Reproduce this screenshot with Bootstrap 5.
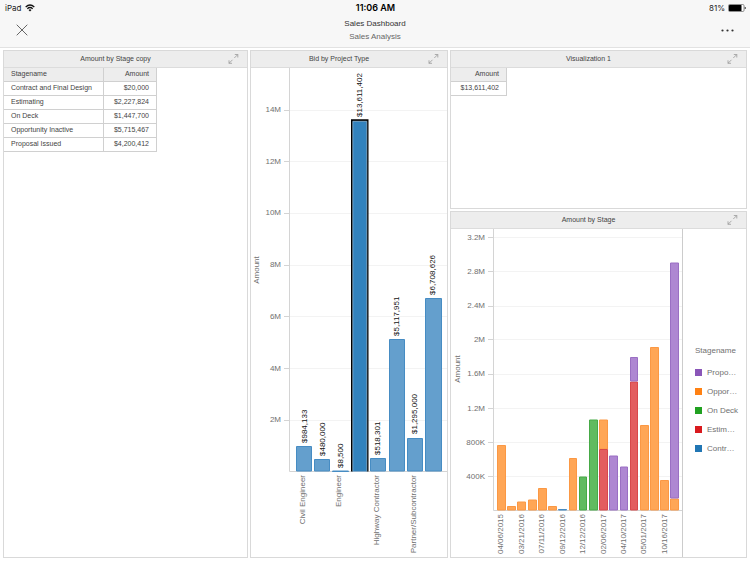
<!DOCTYPE html>
<html lang="en">
<head>
<meta charset="utf-8">
<meta name="viewport" content="width=device-width, initial-scale=1">
<title>Sales Dashboard</title>
<link href="https://cdn.jsdelivr.net/npm/bootstrap@5.3.0/dist/css/bootstrap.min.css" rel="stylesheet">
<style>
  body { font-family: "Liberation Sans", Arial, sans-serif; font-size: 8px; line-height: 12px; color: #4d4d4d; background: #fff; }
  .top-bar { background: #f7f7f7; border-bottom: 1px solid #e2e2e2; }
  .status-row { font-family: Inter, "Liberation Sans", sans-serif; height: 16px; padding: 0 4px 0 5px; color: #222; }
  .status-row > *, .nav-row > .side { flex: 1 1 0; }
  .status-icons { gap: 3px; }
  .clock { font-size: 9px; font-weight: 600; color: #000; }
  .nav-row { height: 31px; padding: 0 15px; }
  .plain-btn { border: 0; background: none; padding: 0; line-height: 0; color: #555; }
  .titles { padding-top: 1px; }
  .page-title { font-size: 8px; line-height: 13px; font-weight: 400; color: #333; }
  .page-sub { font-size: 8px; line-height: 13px; color: #666; }
  .board { display: grid; grid-template-columns: 245fr 198fr 297fr; grid-template-rows: 159fr 347fr; gap: 2px; padding: 2px 3px 4px; }
  .tall { grid-row: 1 / span 2; }
  .panel { border: 1px solid #d9d9d9; background: #fff; min-width: 0; min-height: 0; }
  .panel-head { background: #ededed; border-bottom: 1px solid #dcdcdc; height: 17px; }
  .panel-head h2 { font-size: 7px; line-height: 16px; font-weight: 400; color: #444; }
  .expand-btn { width: 20px; padding-right: 8px; color: #999; }
  .data-grid { border-collapse: separate; border-spacing: 0; font-size: 7px; line-height: 12px; color: #444; }
  .data-grid th, .data-grid td { font-weight: 400; padding: 0 7px 1px; height: 14px; border-right: 1px solid #d0d0d0; border-bottom: 1px solid #d0d0d0; }
  .data-grid thead th { background: #ededed; }
  .name-col { width: 100px; }
  .stage-sum { width: 53px; }
  .total-sum { width: 56px; }
  .plot { min-width: 0; min-height: 0; }
  .plot svg { display: block; width: 100%; height: 100%; }
  svg text { font-family: "Liberation Sans", Arial, sans-serif; font-size: 8px; fill: #707070; }
  svg .val { fill: #111; }
  .gridline { stroke: #f3f3f3; fill: none; }
  .axis { stroke: #d4d4d4; fill: none; }
  .b { fill: #649fcd; stroke: #468cc3; }
  .o { fill: #ffa656; stroke: #fb9844; }
  .g { fill: #60bb60; stroke: #46aa46; }
  .r { fill: #e35d5f; stroke: #d8484b; }
  .p { fill: #ae87d2; stroke: #9a6fc3; }
  .legend-box { flex: 0 0 64px; border-left: 1px solid #ccc; padding: 112px 0 0 12px; color: #707070; }
  .legend-box ul { padding-top: 6px; }
  .legend-box li { height: 19px; gap: 5px; }
  .swatch { width: 7px; height: 7px; }
  .s-p { background: #8a56b8; } .s-o { background: #ff8113; } .s-g { background: #21a121; } .s-r { background: #d91a1e; } .s-b { background: #2176b4; }
</style>
<script src="https://cdn.jsdelivr.net/npm/bootstrap@5.3.0/dist/js/bootstrap.bundle.min.js" defer></script>
</head>
<body class="d-flex flex-column min-vh-100">

<svg class="d-none" aria-hidden="true">
  <symbol id="expand" viewBox="0 0 12 12">
    <path d="M7.300 5 10.800 1.500M7.800 1.500h3v3M5.500 6.800 2 10.300M2 7.300v3h3" fill="none" stroke="currentColor" stroke-width=".8"/>
  </symbol>
</svg>

<header class="top-bar">
  <div class="status-row d-flex align-items-center">
    <div class="d-flex align-items-center gap-1">
      <span>iPad</span>
      <svg width="10" height="8" viewBox="0 0 10 8" aria-label="Wi-Fi"><g fill="none" stroke="#111" stroke-width="1.300"><path d="M.7 2.900Q5-1 9.300 2.900"/><path d="M2.300 4.700Q5 2.300 7.700 4.700"/></g><path d="M3.500 5.900Q5 4.700 6.500 5.900L5 7.500Z" fill="#111"/></svg>
    </div>
    <div class="clock text-center">11:06 AM</div>
    <div class="status-icons d-flex align-items-center justify-content-end">
      <span>81%</span>
      <svg width="18" height="8" viewBox="0 0 18 8" aria-label="Battery"><rect x=".5" y=".5" width="15.500" height="7" rx="1.200" fill="#fff" stroke="#444" stroke-width=".6"/><rect x="1" y="1" width="12.500" height="6" rx=".6" fill="#000"/><path d="M16.700 2.700q1.200.3 1.200 1.300t-1.200 1.300z" fill="#222"/></svg>
    </div>
  </div>
  <div class="nav-row d-flex">
    <div class="side pt-2">
      <button class="plain-btn" type="button" aria-label="Close"><svg width="14" height="12" viewBox="0 0 14 12"><path d="M1.700.7 12.300 11.300M12.300.7 1.700 11.300" stroke="#555" stroke-width=".9"/></svg></button>
    </div>
    <div class="titles text-center">
      <h1 class="page-title m-0">Sales Dashboard</h1>
      <div class="page-sub">Sales Analysis</div>
    </div>
    <div class="side pt-2 text-end">
      <button class="plain-btn" type="button" aria-label="More"><svg width="14" height="12" viewBox="0 0 14 12"><g fill="#333"><circle cx="1.500" cy="6.500" r="1.100"/><circle cx="6.500" cy="6.500" r="1.100"/><circle cx="11.500" cy="6.500" r="1.100"/></g></svg></button>
    </div>
  </div>
</header>

<main class="board flex-grow-1">
  <section class="panel tall">
    <div class="panel-head d-flex align-items-center">
      <h2 class="flex-grow-1 text-center m-0">Amount by Stage copy</h2>
      <button class="plain-btn expand-btn" type="button" aria-label="Expand Amount by Stage copy"><svg width="12" height="12"><use href="#expand"/></svg></button>
    </div>
    <table class="data-grid">
      <thead><tr><th class="name-col" scope="col">Stagename</th><th class="stage-sum text-end" scope="col">Amount</th></tr></thead>
      <tbody>
        <tr><td>Contract and Final Design</td><td class="text-end">$20,000</td></tr>
        <tr><td>Estimating</td><td class="text-end">$2,227,824</td></tr>
        <tr><td>On Deck</td><td class="text-end">$1,447,700</td></tr>
        <tr><td>Opportunity Inactive</td><td class="text-end">$5,715,467</td></tr>
        <tr><td>Proposal Issued</td><td class="text-end">$4,200,412</td></tr>
      </tbody>
    </table>
  </section>

  <section class="panel tall d-flex flex-column">
    <div class="panel-head d-flex align-items-center">
      <h2 class="flex-grow-1 text-center m-0">Bid by Project Type</h2>
      <button class="plain-btn expand-btn" type="button" aria-label="Expand Bid by Project Type"><svg width="12" height="12"><use href="#expand"/></svg></button>
    </div>
    <div class="plot flex-grow-1">
      <svg viewBox="251 68 196 489" role="img" aria-label="Bar chart of bid amount by project type">
        <path class="gridline" d="M290 110.500h157M290 161.500h157M290 213.500h157M290 265.500h157M290 316.500h157M290 368.500h157M290 420.500h157"/>
        <path class="axis" d="M289.500 68V471.500H447M284 110.500h5M284 161.500h5M284 213.500h5M284 265.500h5M284 316.500h5M284 368.500h5M284 420.500h5"/>
        <g text-anchor="end">
          <text x="281" y="112">14M</text><text x="281" y="164">12M</text><text x="281" y="215">10M</text><text x="281" y="267">8M</text><text x="281" y="319">6M</text><text x="281" y="371">4M</text><text x="281" y="422">2M</text>
        </g>
        <text transform="translate(259 270) rotate(-90)" text-anchor="middle">Amount</text>
        <g class="b">
          <path d="M296.500 471V446.500h15V471z"/><path d="M314.500 471V459.500h15V471z"/><path d="M332.500 471.500v-.5h16v.5z"/>
          <path d="M370.500 471V458.500h15V471z"/><path d="M389.500 471V339.500h15V471z"/><path d="M407.500 471V438.500h15V471z"/><path d="M425.500 471V298.500h16V471z"/>
        </g>
        <path d="M351 471.500V119.300h17.500V471.500z" fill="#000"/>
        <path d="M352.800 471.500V121.300h14V471.500z" fill="#3282bd" stroke="#9fc3df" stroke-width=".7"/>
        <g>
          <text class="val" transform="translate(307 443) rotate(-90)">$984,133</text>
          <text class="val" transform="translate(325 456) rotate(-90)">$480,000</text>
          <text class="val" transform="translate(343 468) rotate(-90)">$8,500</text>
          <text class="val" transform="translate(362 117) rotate(-90)">$13,611,402</text>
          <text class="val" transform="translate(380 455) rotate(-90)">$518,301</text>
          <text class="val" transform="translate(399 336) rotate(-90)">$5,117,951</text>
          <text class="val" transform="translate(417 434) rotate(-90)">$1,295,000</text>
          <text class="val" transform="translate(435 295) rotate(-90)">$6,708,626</text>
        </g>
        <g text-anchor="end">
          <text transform="translate(305 475) rotate(-90)">Civil Engineer</text>
          <text transform="translate(341 475) rotate(-90)">Engineer</text>
          <text transform="translate(379 475) rotate(-90)">Highway Contractor</text>
          <text transform="translate(416 475) rotate(-90)">Partner/Subcontractor</text>
        </g>
      </svg>
    </div>
  </section>

  <section class="panel">
    <div class="panel-head d-flex align-items-center">
      <h2 class="flex-grow-1 text-center m-0">Visualization 1</h2>
      <button class="plain-btn expand-btn" type="button" aria-label="Expand Visualization 1"><svg width="12" height="12"><use href="#expand"/></svg></button>
    </div>
    <table class="data-grid">
      <thead><tr><th class="total-sum text-end" scope="col">Amount</th></tr></thead>
      <tbody><tr><td class="text-end">$13,611,402</td></tr></tbody>
    </table>
  </section>

  <section class="panel d-flex flex-column">
    <div class="panel-head d-flex align-items-center">
      <h2 class="flex-grow-1 text-center m-0">Amount by Stage</h2>
      <button class="plain-btn expand-btn" type="button" aria-label="Expand Amount by Stage"><svg width="12" height="12"><use href="#expand"/></svg></button>
    </div>
    <div class="d-flex flex-grow-1 plot">
      <div class="plot flex-grow-1">
        <svg viewBox="451 229 231 328" role="img" aria-label="Stacked bar chart of amount by date and stage">
          <path class="gridline" d="M494 237.500h188M494 271.500h188M494 306.500h188M494 339.500h188M494 374.500h188M494 408.500h188M494 442.500h188M494 476.500h188"/>
          <path class="axis" d="M493.500 229V510.500H682M488 237.500h5M488 271.500h5M488 306.500h5M488 339.500h5M488 374.500h5M488 408.500h5M488 442.500h5M488 476.500h5"/>
          <g text-anchor="end">
            <text x="485" y="240">3.2M</text><text x="485" y="274">2.8M</text><text x="485" y="308">2.4M</text><text x="485" y="342">2M</text><text x="485" y="376">1.6M</text><text x="485" y="411">1.2M</text><text x="485" y="445">800K</text><text x="485" y="479">400K</text>
          </g>
          <text transform="translate(460 369) rotate(-90)" text-anchor="middle">Amount</text>
          <g class="o">
            <path d="M497.500 510V445.500h8V510z"/><path d="M507.500 510V506.500h8V510z"/><path d="M517.500 510V502h8V510z"/><path d="M528.500 510V500h8V510z"/><path d="M538.500 510V488.500h8V510z"/><path d="M548.500 510V506.500h8V510z"/>
            <path d="M569.500 510V458.500h7V510z"/><path d="M599.500 449V420h8V449z"/><path d="M640.500 510V425.500h8V510z"/><path d="M650.500 510V347.500h8V510z"/><path d="M660.500 510V480.500h8V510z"/><path d="M670.500 510V499h8V510z"/>
          </g>
          <path class="b" d="M558.500 510v-.5h8v.5z"/>
          <g class="g"><path d="M579.500 510V477h7V510z"/><path d="M589.500 510V420h8V510z"/></g>
          <g class="r"><path d="M599.500 510V449.500h8V510z"/><path d="M630.500 510V382h7V510z"/></g>
          <g class="p"><path d="M609.500 510V456h8V510z"/><path d="M620.500 510V467h7V510z"/><path d="M630.500 381V357.500h7V381z"/><path d="M670.500 498V263h8V498z"/></g>
          <g text-anchor="end">
            <text transform="translate(503 514) rotate(-90)">04/06/2015</text>
            <text transform="translate(524 514) rotate(-90)">03/21/2016</text>
            <text transform="translate(544 514) rotate(-90)">07/11/2016</text>
            <text transform="translate(565 514) rotate(-90)">09/12/2016</text>
            <text transform="translate(585 514) rotate(-90)">12/12/2016</text>
            <text transform="translate(606 514) rotate(-90)">02/06/2017</text>
            <text transform="translate(626 514) rotate(-90)">04/10/2017</text>
            <text transform="translate(646 514) rotate(-90)">05/01/2017</text>
            <text transform="translate(667 514) rotate(-90)">10/16/2017</text>
          </g>
        </svg>
      </div>
      <aside class="legend-box">
        <div class="pt-1">Stagename</div>
        <ul class="list-unstyled m-0">
          <li class="d-flex align-items-center"><span class="swatch s-p"></span>Propo…</li>
          <li class="d-flex align-items-center"><span class="swatch s-o"></span>Oppor…</li>
          <li class="d-flex align-items-center"><span class="swatch s-g"></span>On Deck</li>
          <li class="d-flex align-items-center"><span class="swatch s-r"></span>Estim…</li>
          <li class="d-flex align-items-center"><span class="swatch s-b"></span>Contr…</li>
        </ul>
      </aside>
    </div>
  </section>
</main>
</body>
</html>
